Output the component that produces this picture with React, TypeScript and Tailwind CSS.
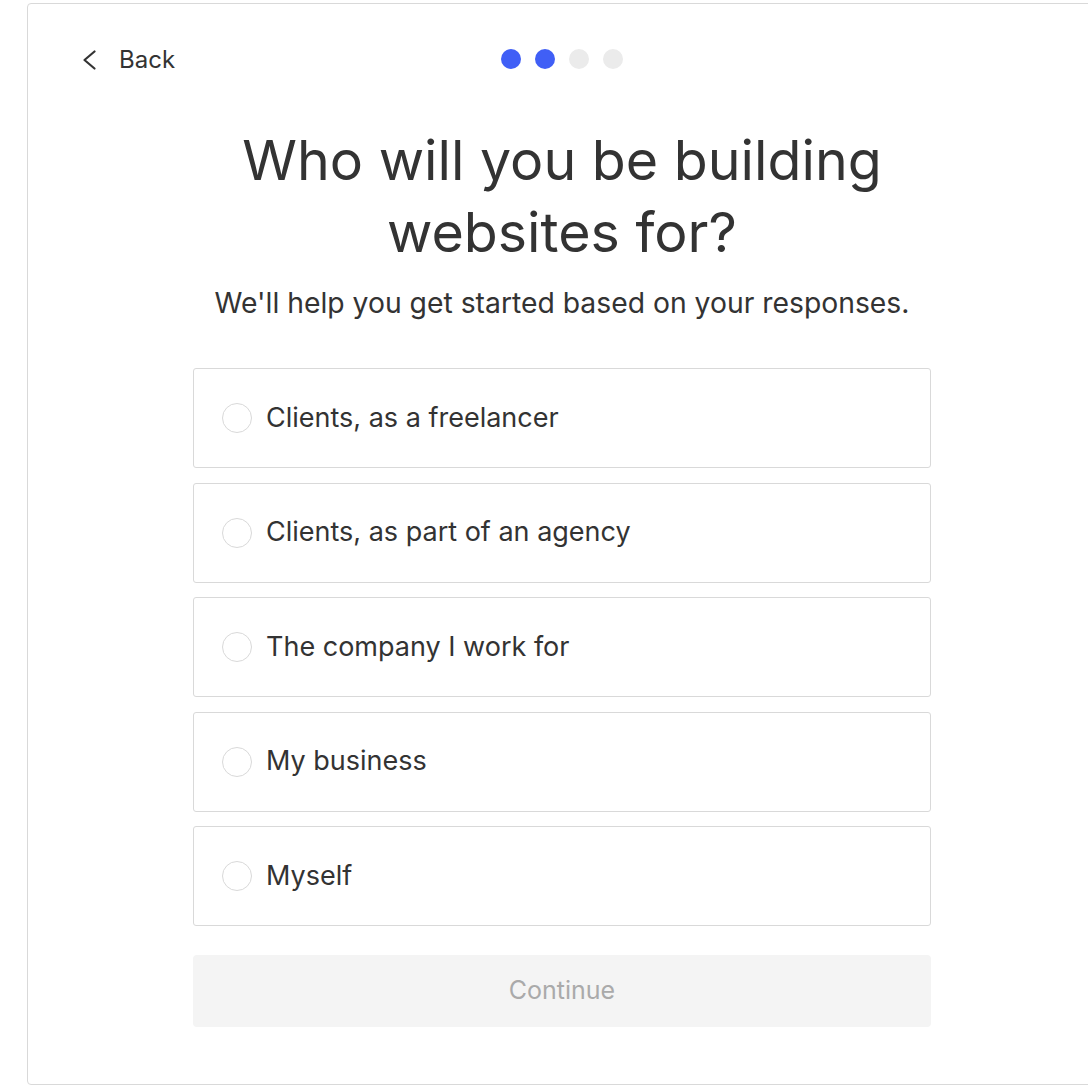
import React from "react";

const options = [
  "Clients, as a freelancer",
  "Clients, as part of an agency",
  "The company I work for",
  "My business",
  "Myself",
];

export default function App() {
  return (
    <div className="w-[1088px] h-[1086px] overflow-hidden bg-white" style={{ fontFamily: "Inter, 'Noto Sans', sans-serif" }}>
      <div className="ml-[27px] mt-[3px] w-[1070px] h-[1082px] border border-[#d9d9d9] rounded-[4px] flex flex-col items-center text-[#333333]">
        <div className="w-full relative h-[110px] flex items-center justify-center">
          <button className="absolute left-[54px] top-[40px] flex items-center gap-[22px] text-[24px] leading-[32px] text-[#333333]">
            <svg width="15" height="20" viewBox="0 0 15 20" fill="none" stroke="#333333" strokeWidth="2.2" strokeLinecap="round" strokeLinejoin="round">
              <path d="M12.5 1.5 L2.5 10 L12.5 18.5" />
            </svg>
            <span>Back</span>
          </button>
          <div className="flex gap-[14px]">
            <span className="w-[20px] h-[20px] rounded-full bg-[#405ff6]" />
            <span className="w-[20px] h-[20px] rounded-full bg-[#405ff6]" />
            <span className="w-[20px] h-[20px] rounded-full bg-[#ebebeb]" />
            <span className="w-[20px] h-[20px] rounded-full bg-[#ebebeb]" />
          </div>
        </div>
        <h1 className="text-[55.5px] leading-[72px] font-normal text-center mt-[10px]">
          Who will you be building
          <br />
          websites for?
        </h1>
        <p className="text-[28.3px] leading-[36px] font-normal mt-[17px]">We'll help you get started based on your responses.</p>
        <div className="w-[738px] mt-[47px] flex flex-col gap-[14.5px]">
          {options.map((o) => (
            <label key={o} className="h-[100px] border border-[#d9d9d9] rounded-[3px] flex items-center pl-[28px] gap-[14px] cursor-pointer">
              <span className="w-[30px] h-[30px] rounded-full border border-[#d9d9d9]" />
              <span className="text-[27px]">{o}</span>
            </label>
          ))}
          <button className="mt-[14.5px] h-[72px] rounded-[4px] bg-[#f4f4f4] text-[#aaaaaa] text-[25px]">Continue</button>
        </div>
      </div>
    </div>
  );
}
